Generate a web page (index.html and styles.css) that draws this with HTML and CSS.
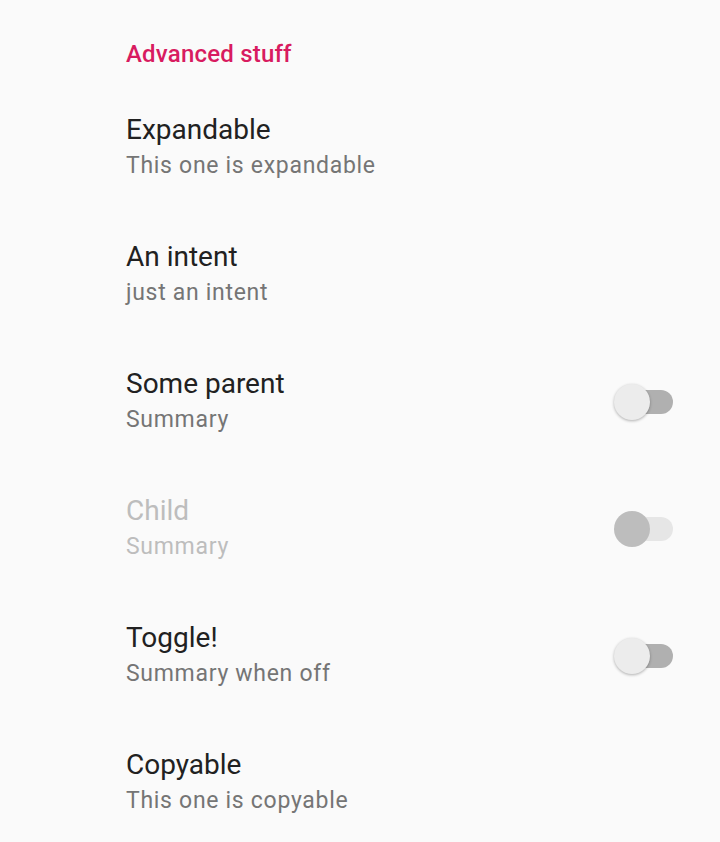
FILE: index.html
```html
<!DOCTYPE html>
<html>
<head>
<meta charset="utf-8">
<link rel="stylesheet" href="styles.css">
</head>
<body>
<div class="screen">
  <div class="category">Advanced stuff</div>
  <div class="pref">
    <div class="texts"><div class="title">Expandable</div><div class="summary">This one is expandable</div></div>
  </div>
  <div class="pref">
    <div class="texts"><div class="title">An intent</div><div class="summary">just an intent</div></div>
  </div>
  <div class="pref">
    <div class="texts"><div class="title">Some parent</div><div class="summary">Summary</div></div>
    <div class="switch"><div class="track"></div><div class="thumb"></div></div>
  </div>
  <div class="pref disabled">
    <div class="texts"><div class="title">Child</div><div class="summary">Summary</div></div>
    <div class="switch"><div class="track"></div><div class="thumb"></div></div>
  </div>
  <div class="pref">
    <div class="texts"><div class="title">Toggle!</div><div class="summary">Summary when off</div></div>
    <div class="switch"><div class="track"></div><div class="thumb"></div></div>
  </div>
  <div class="pref">
    <div class="texts"><div class="title">Copyable</div><div class="summary">This one is copyable</div></div>
  </div>
</div>
</body>
</html>
```
FILE: styles.css
```css
html, body { margin: 0; padding: 0; background: #fafafa; }
body { font-family: Roboto, "Noto Sans", sans-serif; overflow: hidden; }
.screen { width: 720px; height: 842px; background: #fafafa; }
.category {
  height: 84px;
  box-sizing: border-box;
  padding: 38px 0 0 126px;
  font-size: 24px;
  line-height: 32px;
  letter-spacing: 0.2px;
  font-weight: 500;
  color: #d81b60;
}
.pref {
  height: 127px;
  display: flex;
  align-items: center;
  padding: 0 47px 0 126px;
}
.texts { flex: 1; }
.title { font-size: 28px; line-height: 35px; color: #212121; }
.summary { font-size: 23px; line-height: 35px; padding-top: 1px; letter-spacing: 0.7px; color: #757575; }
.disabled .title, .disabled .summary { color: #bdbdbd; }
.switch { position: relative; width: 59px; height: 36px; }
.track {
  position: absolute; right: 0; top: 6px;
  width: 48px; height: 24px; border-radius: 12px;
  background: #b0b0b0;
}
.thumb {
  position: absolute; left: 0; top: 0;
  width: 36px; height: 36px; border-radius: 50%;
  background: #ececec;
  box-shadow: 0 1px 3px rgba(0,0,0,0.3);
}
.disabled .track { background: #e6e6e6; }
.disabled .thumb { background: #bdbdbd; box-shadow: none; }
```
